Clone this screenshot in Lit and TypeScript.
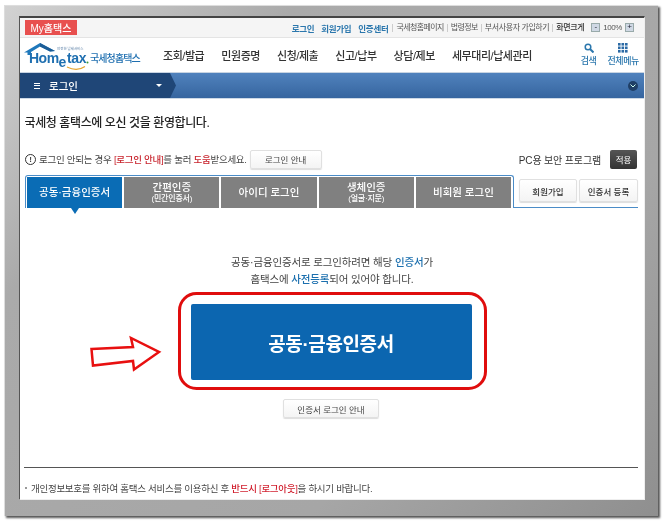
import { LitElement, html, css } from "lit";
import { customElement } from "lit/decorators.js";

@customElement("app-root")
export class AppRoot extends LitElement {
  static styles = css`
    :host { display: block; width: 666px; height: 523px; background: #fff; overflow: hidden;
      font-family: "Liberation Sans", "Noto Sans CJK KR", sans-serif; color: #333; }
    * { box-sizing: border-box; }
    .stage { position: relative; width: 666px; height: 523px; padding: 5px 0 0 4px; }
    .frame { width: 654px; height: 511px; padding: 10px 0 0 14px;
      background: linear-gradient(135deg, #d2d2d2 0%, #aaaaaa 25%, #a6a6a6 70%, #8f8f8f 100%);
      box-shadow: 2px 2px 2px #555; border-top: 1px solid #ddd; border-left: 1px solid #ddd; }
    .page { width: 626px; height: 484px; background: #fff; border-top: 2px solid #444; border-left: 1px solid #555;
      border-right: 1px solid #eee; border-bottom: 1px solid #eee; display: flex; flex-direction: column; filter: blur(0.25px); }
    .top { height: 20px; flex: none; background: #f5f5f5; border-bottom: 1px solid #e4e4e4; display: flex; align-items: center; padding: 0 0 0 5px; font-size: 8.5px; }
    .my { width: 52px; height: 15px; background: #e8504f; color: #fff; font-size: 10px; font-weight: 500; display: flex; align-items: center; justify-content: center; }
    .util { margin-left: auto; display: flex; align-items: center; color: #555; white-space: nowrap; }
    .util b { color: #2b77ad; font-weight: 700; margin-right: 7px; letter-spacing: -0.3px; }
    .util b.last { margin-right: 4px; }
    .util span { padding: 0 3px; border-left: 1px solid #ccc; line-height: 8px; font-size: 8px; letter-spacing: -0.6px; }
    .util span.wide { letter-spacing: -0.4px; }
    .util span.k { color: #333; font-weight: 500; letter-spacing: -0.4px; }
    .zoom { display: flex; align-items: center; gap: 3px; margin-left: 4px; margin-right: 10px; font-size: 8px; letter-spacing: -0.4px; color: #555; }
    .zb { width: 9px; height: 9px; background: #cfd8e4; border: 1px solid #9aa; font-size: 8px; line-height: 6px; text-align: center; color: #223; }
    .head { height: 35px; flex: none; display: flex; align-items: center; border-bottom: 1px solid #c8d4e2; }
    .logo { width: 123px; margin-left: 4px; flex: none; display: block; }
    .nav { display: flex; gap: 17px; margin-left: 16px; font-size: 11px; font-weight: 500; color: #333; letter-spacing: -0.45px; white-space: nowrap; }
    .side { margin-left: auto; display: flex; margin-right: 5px; gap: 11px; color: #2b77ad; font-size: 9px; letter-spacing: -0.4px; font-weight: 500; text-align: center; }
    .side div { display: flex; flex-direction: column; align-items: center; gap: 1px; }
    .side svg { display: block; }
    .bar { height: 26px; flex: none; background: linear-gradient(#5082bd, #36659f); display: flex; align-items: center; border-bottom: 1px solid #cdd9e6; }
    .crumb { width: 156px; height: 100%; background: #1f4677; clip-path: polygon(0 0, 150px 0, 156px 50%, 150px 100%, 0 100%); color: #fff; display: flex; align-items: center; padding-left: 14px; font-size: 10.5px; font-weight: 500; gap: 9px; position: relative; }
    .burger { width: 6px; height: 6px; border-top: 1px solid #fff; border-bottom: 1px solid #fff; position: relative; }
    .burger::after { content: ""; position: absolute; left: 0; right: 0; top: 1.5px; border-top: 1px solid #fff; }
    .caret { position: absolute; right: 14px; top: 11px; border: 3px solid transparent; border-top-color: #fff; border-bottom: 0; }
    .down { margin-left: auto; margin-right: 6px; width: 10px; height: 10px; border-radius: 50%; background: #1f3f66; display: flex; align-items: center; justify-content: center; }
    .main { flex: 1; padding: 0 6px 0 5px; display: flex; flex-direction: column; }
    h1 { margin: 15px 0 0 -0.5px; font-size: 12px; font-weight: 500; color: #222; line-height: 18px; letter-spacing: -0.4px; }
    .info { display: flex; align-items: center; margin-top: 17px; font-size: 9.5px; height: 20px; color: #444; white-space: nowrap; letter-spacing: -0.27px; }
    .info em { font-style: normal; color: #c8242d; font-weight: 500; }
    .ico { width: 11px; height: 11px; border: 1px solid #333; border-radius: 50%; margin-right: 3px; font-size: 8px; line-height: 9px; text-align: center; font-weight: 700; flex: none; }
    .btn { background: linear-gradient(#fff, #f4f4f4); border: 1px solid #e0e0e0; border-radius: 2px; box-shadow: 0 1px 1px #ddd; display: flex; align-items: center; justify-content: center; font-size: 8.5px; color: #444; white-space: nowrap; letter-spacing: 0; }
    .guide { width: 72px; height: 19px; margin-left: 3px; }
    .sec { margin-left: auto; display: flex; align-items: center; font-size: 10px; color: #333; letter-spacing: -0.15px; }
    .apply { width: 27px; height: 19px; margin-left: 9px; background: linear-gradient(#555, #333); border-radius: 2px; color: #fff; font-size: 8.5px; display: flex; align-items: center; justify-content: center; margin-right: 1px; }
    .tabs { display: flex; margin-top: 6px; height: 33px; }
    .tablist { display: flex; width: 489px; gap: 2px; padding: 1px 2px 0 1px; border-top: 1px solid #4b8cc7; border-left: 1px solid #4b8cc7; border-right: 1px solid #4b8cc7; border-top-left-radius: 3px; border-top-right-radius: 3px; }
    .tab { flex: 1; background: #808080; color: #fff; font-size: 10.5px; font-weight: 500; display: flex; flex-direction: column; align-items: center; justify-content: center; line-height: 13px; white-space: nowrap; }
    .tab small { font-size: 8px; line-height: 10px; font-weight: 500; letter-spacing: -0.2px; }
    .tab.on { background: #0a6cb5; position: relative; }
    .tab.on::after { content: ""; position: absolute; left: 44px; bottom: -6px; border: 4px solid transparent; border-top: 6px solid #0a6cb5; border-bottom: 0; }
    .tabside { flex: 1; display: flex; justify-content: flex-end; gap: 2px; padding: 4px 0 5px; border-bottom: 1px solid #4b8cc7; }
    .tabside .btn { font-weight: 500; color: #333; }
    .b1 { width: 58px; } .b2 { width: 59px; }
    .msg { margin-top: 46px; text-align: center; font-size: 10.5px; line-height: 17px; color: #444; letter-spacing: -0.15px; margin-right: -1px; }
    .msg em { font-style: normal; color: #1b6fae; font-weight: 500; }
    .cert { align-self: center; margin: 16px 0 0 -1px; width: 281px; height: 76px; background: #0c66b0; border-radius: 2px; color: #fff; font-size: 19px; font-weight: 700; display: flex; align-items: center; justify-content: center; letter-spacing: -0.4px; }
    .more { align-self: center; margin: 19px 0 0 -1px; width: 96px; height: 19px; }
    .foot { margin: auto 0 0 -1px; height: 32px; border-top: 1px solid #555; font-size: 9.5px; display: flex; align-items: center; color: #444; white-space: nowrap; letter-spacing: -0.28px; padding-top: 8px; }
    .foot em { font-style: normal; color: #d11f2e; font-weight: 500; }
    .foot i { width: 2px; height: 2px; background: #999; margin: 0 4px 0 1px; }
    .mark { position: absolute; left: 0; top: 0; width: 666px; height: 523px; pointer-events: none; filter: blur(0.2px); }
  `;

  render() {
    return html`
      <div class="stage">
        <div class="frame">
          <div class="page">
            <div class="top">
              <div class="my">My홈택스</div>
              <div class="util">
                <b>로그인</b><b>회원가입</b><b class="last">인증센터</b>
                <span>국세청홈페이지</span><span>법령정보</span><span class="wide">부서사용자 가입하기</span><span class="k">화면크게</span>
                <div class="zoom"><div class="zb">-</div>100%<div class="zb">+</div></div>
              </div>
            </div>
            <div class="head">
              <svg class="logo" viewBox="0 0 123 32" height="32" aria-label="Hometax 국세청홈택스">
                <path d="M0 13.5 L16 4 L31 12 L26 12.5 L16 7.5 L7 13 L7 16 L3.5 16 L3.5 13.5 Z" fill="#1f78bb"/>
                <path d="M16 4 L31 12 L26 12.5 L16 7.5 Z" fill="#1c5d97"/>
                <text x="5" y="24" font-family="Liberation Sans, sans-serif" font-size="14" font-weight="700" fill="#1f6fb0" letter-spacing="-.5">Hom</text>
                <text x="34.5" y="28" font-family="Liberation Sans, sans-serif" font-size="14" font-weight="700" fill="#1f6fb0">e</text>
                <text x="43" y="24" font-family="Liberation Sans, sans-serif" font-size="14" font-weight="700" fill="#1f6fb0" letter-spacing="-.4">tax</text>
                <circle cx="63.5" cy="23.5" r="1" fill="#3a9a3a"/>
                <path d="M43 28 Q53 33 61 27.5" stroke="#e7a42c" stroke-width="1.2" fill="none"/>
                <text x="33" y="11" font-family="Noto Sans CJK KR, sans-serif" font-size="3.5" fill="#5a7fa6">안전한 납세서비스</text>
                <text x="66" y="23" font-family="Noto Sans CJK KR, sans-serif" font-size="10" font-weight="500" fill="#1f6fb0" letter-spacing="-.9">국세청홈택스</text>
              </svg>
              <div class="nav">
                <span>조회/발급</span><span>민원증명</span><span>신청/제출</span><span>신고/납부</span><span>상담/제보</span><span>세무대리/납세관리</span>
              </div>
              <div class="side">
                <div>
                  <svg width="10" height="10" viewBox="0 0 10 10"><circle cx="4" cy="4" r="2.8" fill="none" stroke="#2b77ad" stroke-width="1.5"/><path d="M6 6 L9.5 9.5" stroke="#2b77ad" stroke-width="2"/></svg>
                  <span>검색</span>
                </div>
                <div>
                  <svg width="10" height="10" viewBox="0 0 10 10" fill="#2b6aa5"><rect x="0" y="0" width="2.6" height="2.6"/><rect x="3.5" y="0" width="2.6" height="2.6"/><rect x="7" y="0" width="2.6" height="2.6"/><rect x="0" y="3.5" width="2.6" height="2.6"/><rect x="3.5" y="3.5" width="2.6" height="2.6"/><rect x="7" y="3.5" width="2.6" height="2.6"/><rect x="0" y="7" width="2.6" height="2.6"/><rect x="3.5" y="7" width="2.6" height="2.6"/><rect x="7" y="7" width="2.6" height="2.6"/></svg>
                  <span>전체메뉴</span>
                </div>
              </div>
            </div>
            <div class="bar">
              <div class="crumb"><div class="burger"></div>로그인<div class="caret"></div></div>
              <div class="down"><svg width="6" height="4" viewBox="0 0 6 4"><path d="M.5 .5 L3 3 L5.5 .5" fill="none" stroke="#cfe" stroke-width="1"/></svg></div>
            </div>
            <div class="main">
              <h1>국세청 홈택스에 오신 것을 환영합니다.</h1>
              <div class="info">
                <div class="ico">!</div>로그인 안되는 경우&nbsp;<em>[로그인 안내]</em>를 눌러&nbsp;<em>도움</em>받으세요.
                <div class="btn guide">로그인 안내</div>
                <div class="sec">PC용 보안 프로그램<div class="apply">적용</div></div>
              </div>
              <div class="tabs">
                <div class="tablist">
                  <div class="tab on">공동·금융인증서</div>
                  <div class="tab">간편인증<small>(민간인증서)</small></div>
                  <div class="tab">아이디 로그인</div>
                  <div class="tab">생체인증<small>(얼굴·지문)</small></div>
                  <div class="tab">비회원 로그인</div>
                </div>
                <div class="tabside">
                  <div class="btn b1">회원가입</div>
                  <div class="btn b2">인증서 등록</div>
                </div>
              </div>
              <div class="msg">
                공동·금융인증서로 로그인하려면 해당 <em>인증서</em>가<br />
                홈택스에 <em>사전등록</em>되어 있어야 합니다.
              </div>
              <div class="cert">공동·금융인증서</div>
              <div class="btn more">인증서 로그인 안내</div>
              <div class="foot"><i></i>개인정보보호를 위하여 홈택스 서비스를 이용하신 후&nbsp;<em>반드시 [로그아웃]</em>을 하시기 바랍니다.</div>
            </div>
          </div>
        </div>
        <svg class="mark" viewBox="0 0 666 523">
          <rect x="179.5" y="293.5" width="306" height="95" rx="17" fill="none" stroke="#e00d0d" stroke-width="3"/>
          <path d="M91.5 349 L133 347 L131 338 L159 352 L134 369.5 L133 361 L93 365.5 Z" fill="#fff" stroke="#e81010" stroke-width="2.5"/>
        </svg>
      </div>
    `;
  }
}
